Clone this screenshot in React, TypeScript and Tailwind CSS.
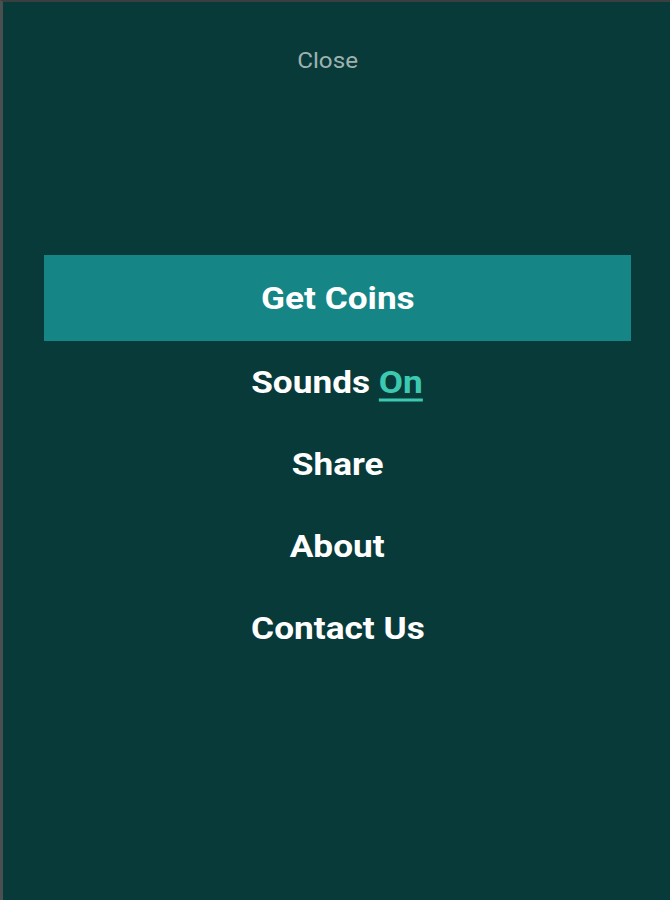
const items = ['Share', 'About', 'Contact Us'];

// Menu labels in the reference are rendered slightly wide, so stretch them a bit.
function Label({ children }: { children: React.ReactNode }) {
  return <span className="inline-block -translate-y-[0.5px] scale-x-[1.1]">{children}</span>;
}

export default function App() {
  return (
    <div
      className="h-[900px] w-[670px] overflow-hidden border-l-[3px] border-t-2 border-l-[#4a4f50] border-t-[#3a3f40] bg-[#083a3a]"
      style={{ fontFamily: 'Roboto, "Liberation Sans", sans-serif' }}
    >
      {/* Close link */}
      <div className="flex h-[116px] justify-center pt-[45px] pr-[18px]">
        <button className="h-[28px] text-[22px] leading-[28px] text-[#9fb2b0]">
          <span className="inline-block scale-x-[1.1]">Close</span>
        </button>
      </div>

      {/* Menu */}
      <div className="mt-[137px] flex flex-col pl-[41px] pr-[39px]">
        <button className="flex h-[86px] items-center justify-center bg-[#158585] text-[32px] font-bold text-white">
          <Label>Get Coins</Label>
        </button>
        <button className="flex h-[82px] items-center justify-center text-[32px] font-bold text-white">
          <Label>
            Sounds{' '}
            <span className="text-[#3dc9b0] underline decoration-[3px] underline-offset-[6px]">On</span>
          </Label>
        </button>
        {items.map((label) => (
          <button
            key={label}
            className="flex h-[82px] items-center justify-center text-[32px] font-bold text-white"
          >
            <Label>{label}</Label>
          </button>
        ))}
      </div>
    </div>
  );
}
